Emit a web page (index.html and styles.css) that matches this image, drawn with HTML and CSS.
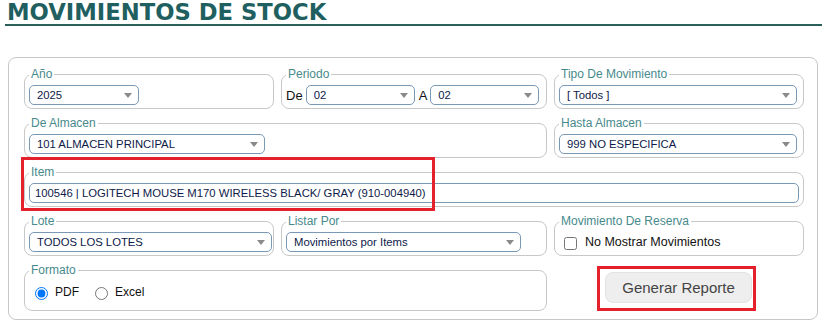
FILE: index.html
```html
<!DOCTYPE html>
<html lang="es">
<head>
    <meta charset="UTF-8">
    <meta name="viewport" content="width=device-width, initial-scale=1.0">
    <title>Movimientos de Stock</title>
    <link rel="stylesheet" href="styles.css">
</head>
<body>
    <h1 class="page-title">MOVIMIENTOS DE STOCK</h1>

    <div class="panel">
        <form class="filters" id="stockForm">
            <fieldset class="box">
                <legend>Año</legend>
                <span class="sel w-anio">
                    <select name="anio"><option>2025</option></select>
                </span>
            </fieldset>

            <fieldset class="box">
                <legend>Periodo</legend>
                <div class="inline">
                    <label class="lbl">De</label>
                    <span class="sel w-mes">
                        <select name="desde"><option>02</option></select>
                    </span>
                    <label class="lbl">A</label>
                    <span class="sel w-mes">
                        <select name="hasta"><option>02</option></select>
                    </span>
                </div>
            </fieldset>

            <fieldset class="box">
                <legend>Tipo De Movimiento</legend>
                <span class="sel w-wide">
                    <select name="tipo"><option>[ Todos ]</option></select>
                </span>
            </fieldset>

            <fieldset class="box span-2">
                <legend>De Almacen</legend>
                <span class="sel w-almacen">
                    <select name="almacen_desde"><option>101 ALMACEN PRINCIPAL</option></select>
                </span>
            </fieldset>

            <fieldset class="box">
                <legend>Hasta Almacen</legend>
                <span class="sel w-wide">
                    <select name="almacen_hasta"><option>999 NO ESPECIFICA</option></select>
                </span>
            </fieldset>

            <fieldset class="box span-3">
                <legend>Item</legend>
                <input type="text" class="txt" name="item" value="100546 | LOGITECH MOUSE M170 WIRELESS BLACK/ GRAY (910-004940)">
            </fieldset>

            <fieldset class="box">
                <legend>Lote</legend>
                <span class="sel w-lote">
                    <select name="lote"><option>TODOS LOS LOTES</option></select>
                </span>
            </fieldset>

            <fieldset class="box">
                <legend>Listar Por</legend>
                <span class="sel w-listar">
                    <select name="listar"><option>Movimientos por Items</option></select>
                </span>
            </fieldset>

            <fieldset class="box">
                <legend>Movimiento De Reserva</legend>
                <label class="check">
                    <input type="checkbox" name="no_reserva">
                    No Mostrar Movimientos
                </label>
            </fieldset>

            <fieldset class="box span-2">
                <legend>Formato</legend>
                <div class="inline radios">
                    <label class="radio"><input type="radio" name="formato" value="pdf" checked> PDF</label>
                    <label class="radio"><input type="radio" name="formato" value="excel"> Excel</label>
                </div>
            </fieldset>

            <div class="report-cell">
                <button type="submit" class="btn-report">Generar Reporte</button>
            </div>
        </form>

        <!-- highlight around the item field -->
        <div class="mark mark-item"></div>
    </div>
</body>
</html>
```

FILE: styles.css
```css
body {
    margin: 0;
    font-family: "Liberation Sans", Arial, sans-serif;
    background-color: #fff;
}
.page-title {
    margin: 0 0 0 5px;
    padding-left: 2px;
    font-family: "DejaVu Sans", Verdana, sans-serif;
    font-size: 22.7px;
    font-weight: bold;
    line-height: 24px;
    color: #1f5f5f;
    border-bottom: 2px solid #2b5f5a;
}
.panel {
    position: relative;
    margin: 31px 4px 0 8px;
    padding: 9px 13px 8px 15px;
    border: 1px solid #c8c8c8;
    border-radius: 8px;
}
.filters {
    display: grid;
    grid-template-columns: 250px 266px 250px;
    column-gap: 7px;
    row-gap: 7px;
}
.span-2 {
    grid-column: span 2;
}
.span-3 {
    grid-column: span 3;
}
.box {
    margin: 0;
    min-width: 0;
    padding: 4px 4px 3px 4px;
    border: 1px solid #c8c8c8;
    border-radius: 8px;
}
.box legend {
    padding: 0 2px;
    font-size: 12px;
    line-height: 14px;
    color: #478a8c;
}
.inline {
    display: flex;
    align-items: center;
    height: 20px;
}
.lbl {
    font-size: 13px;
    color: #111;
    margin-right: 3px;
}
.sel + .lbl {
    margin-left: 4px;
}
.sel {
    position: relative;
    display: inline-block;
    vertical-align: top;
}
.sel::after {
    content: "";
    position: absolute;
    right: 7px;
    top: 8px;
    border-left: 4px solid transparent;
    border-right: 4px solid transparent;
    border-top: 5px solid #8a8a8a;
    pointer-events: none;
}
.sel select,
.txt {
    display: block;
    box-sizing: border-box;
    width: 100%;
    height: 20px;
    margin: 0;
    padding: 0 20px 0 7px;
    appearance: none;
    background-color: #fff;
    border: 1px solid #7a99b6;
    border-radius: 5px;
    font-family: "Liberation Sans", Arial, sans-serif;
    font-size: 11.3px;
    color: #0e1a4a;
    outline: none;
}
.txt {
    width: 770px;
    padding: 0 4px 0 5px;
}
.w-anio { width: 110px; }
.w-mes { width: 109px; }
.w-wide { width: 238px; }
.w-almacen { width: 236px; }
.w-lote { width: 243px; }
.w-listar { width: 235px; }
.check {
    display: flex;
    align-items: center;
    height: 20px;
    font-size: 12.5px;
    color: #111;
}
.check input {
    width: 13px;
    height: 13px;
    margin: 3px 8px 0 5px;
}
.radios {
    height: 21px;
}
.radio {
    display: flex;
    align-items: center;
    font-size: 12px;
    color: #111;
    margin-right: 10px;
}
.radio input {
    width: 13px;
    height: 13px;
    margin: 3px 7px 0 6px;
}
.report-cell {
    justify-self: center;
    align-self: start;
    margin: 3px 5px 0 0;
    padding: 3px 1px 5px 5px;
    border: 3px solid #e3202b;
}
.btn-report {
    display: block;
    width: 147px;
    height: 31px;
    padding: 0;
    background-color: #eeeeee;
    border: 1px solid #e2e2e2;
    border-radius: 8px;
    font-family: "Liberation Sans", Arial, sans-serif;
    font-size: 15px;
    color: #444;
    cursor: pointer;
}
.btn-report:hover {
    background-color: #e4e4e4;
}
.mark {
    position: absolute;
    border: 3px solid #e3202b;
    pointer-events: none;
}
.mark-item {
    left: 12px;
    top: 99px;
    width: 408px;
    height: 48px;
}
```
